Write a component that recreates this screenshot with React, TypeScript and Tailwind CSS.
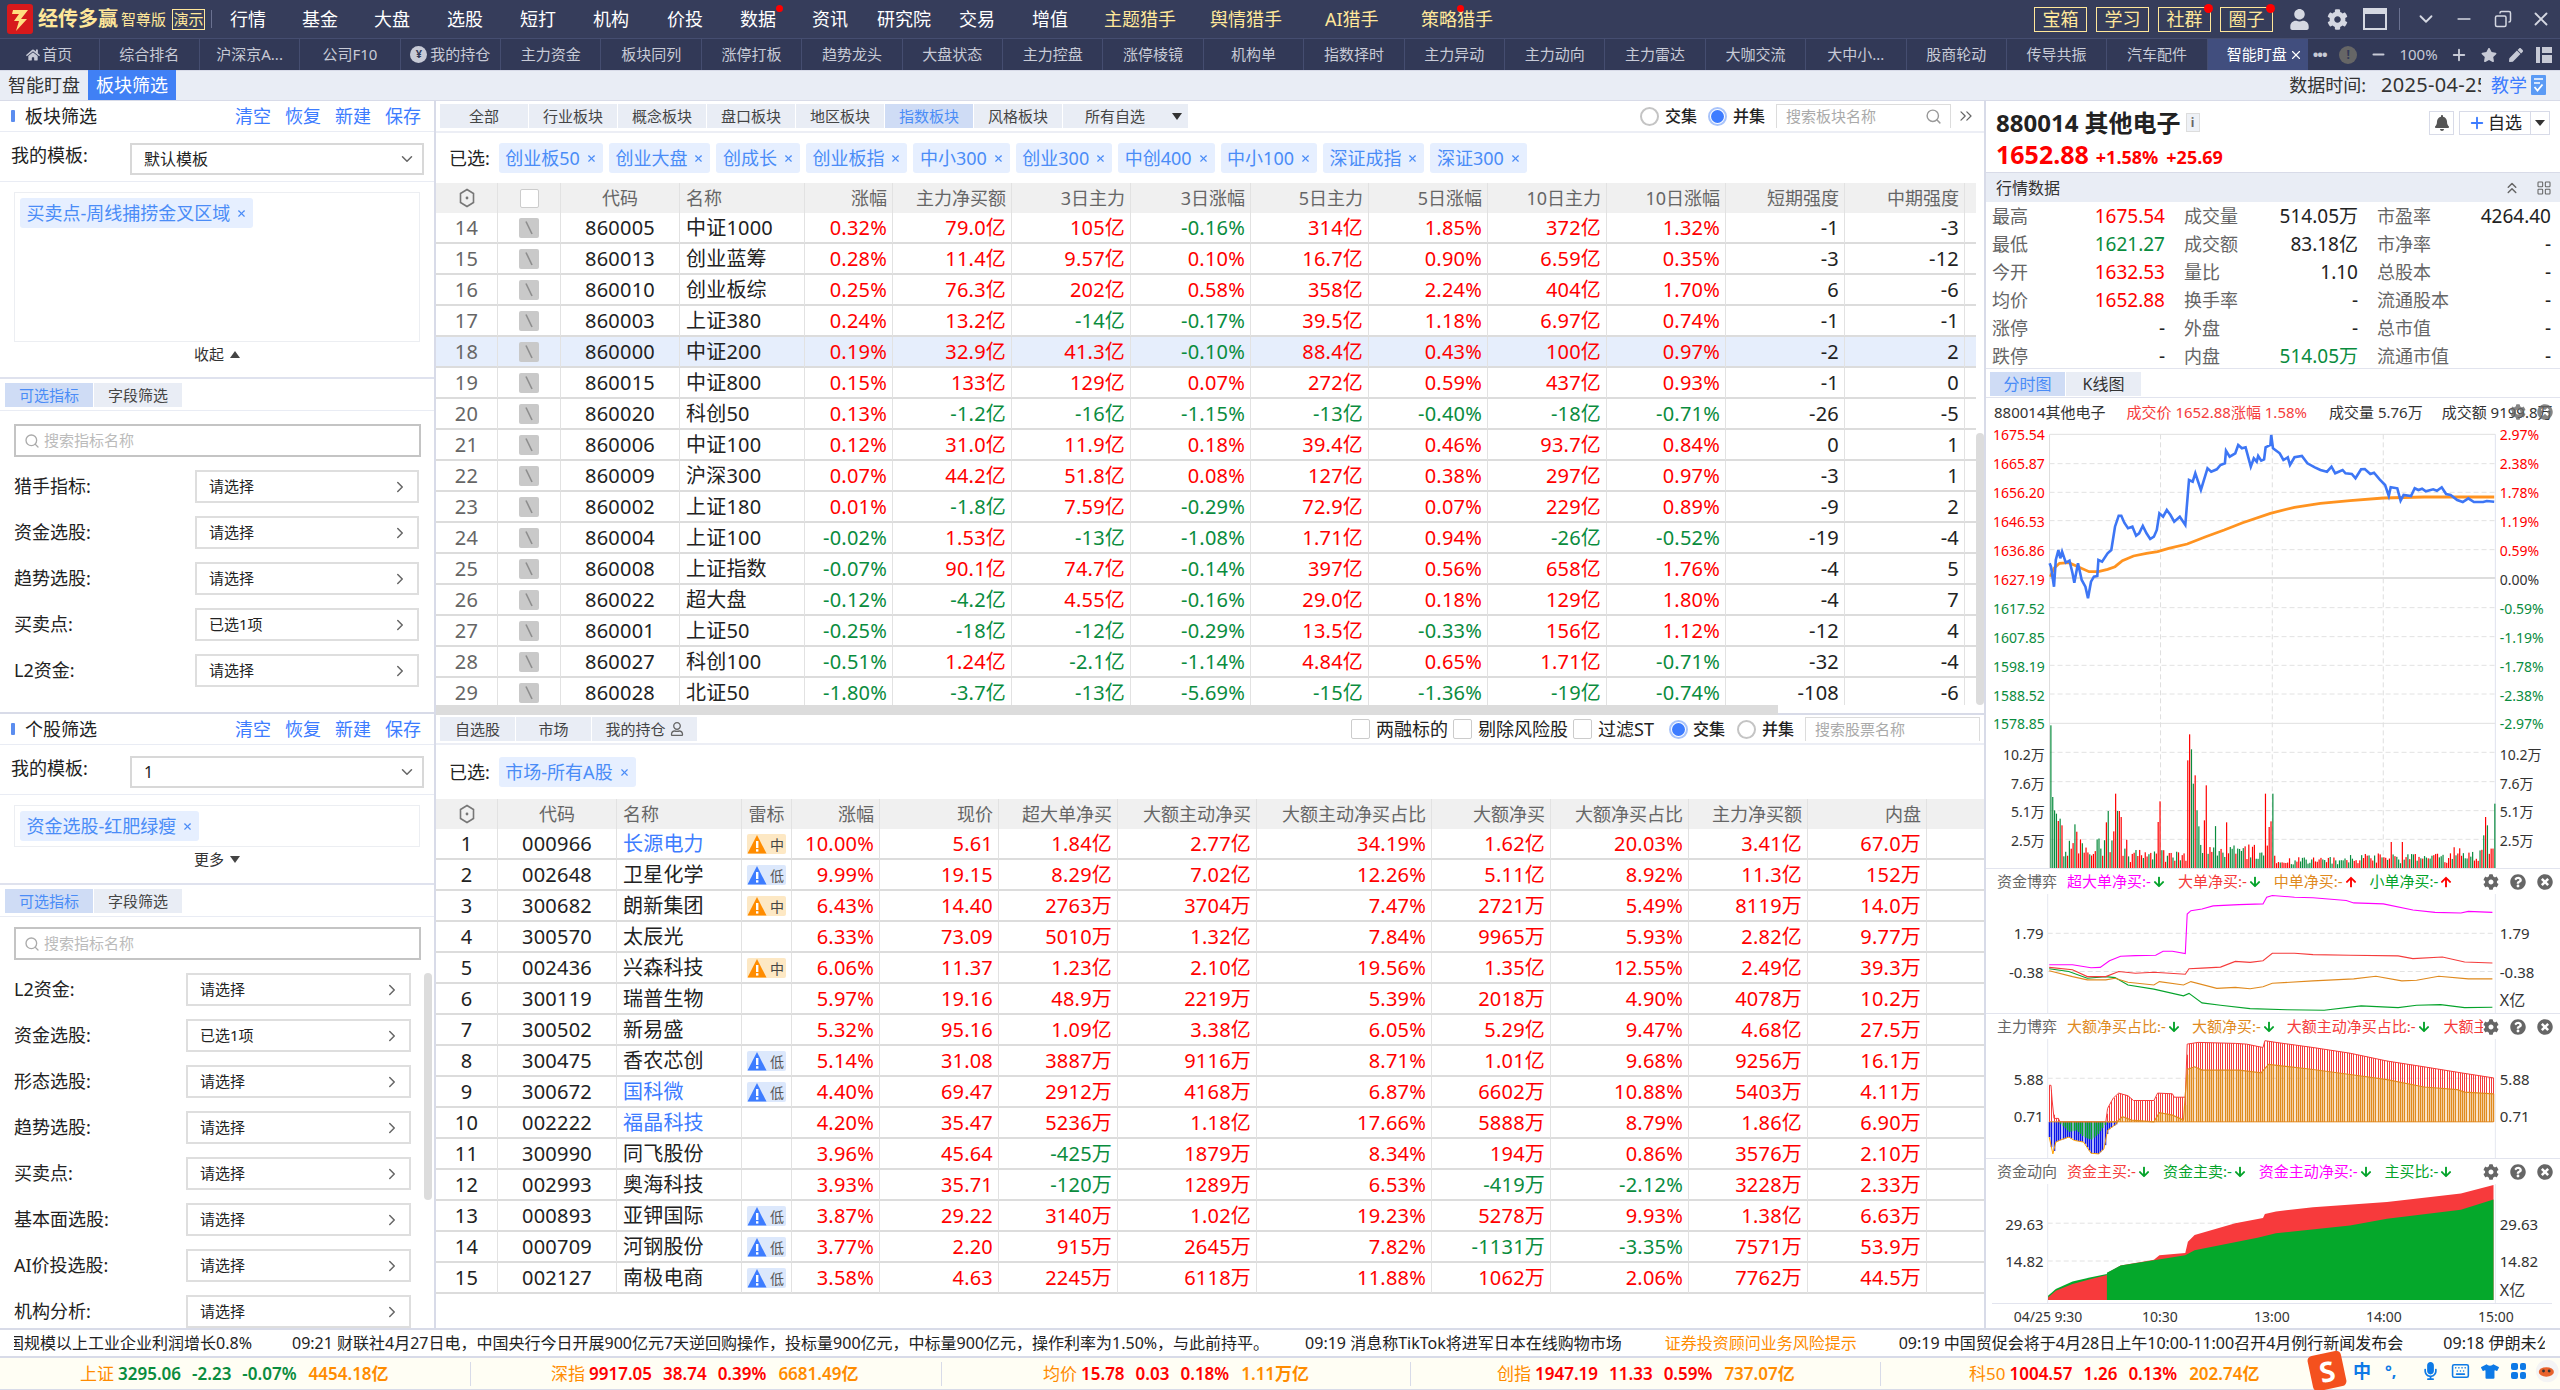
import { ChevronDown, ChevronRight, ChevronsRight, ChevronsUp, LayoutGrid, Minus, Plus, Search, X, Copy, Keyboard } from "lucide-react";
import { FaArrowDown, FaArrowUp, FaBell, FaCog, FaHome, FaMicrophone, FaPen, FaQuestionCircle, FaRegUser, FaStar, FaTimesCircle, FaTshirt, FaUser } from "react-icons/fa";

type Pt = [number, number];

const topMenu: [string, number, boolean, boolean][] = [
  ["行情", 72, false, false],
  ["基金", 72, false, false],
  ["大盘", 73, false, false],
  ["选股", 73, false, false],
  ["短打", 73, false, false],
  ["机构", 74, false, false],
  ["价投", 73, false, false],
  ["数据", 72, false, true],
  ["资讯", 65, false, false],
  ["研究院", 82, false, false],
  ["交易", 73, false, false],
  ["增值", 72, false, false],
  ["主题猎手", 106, true, false],
  ["舆情猎手", 115, true, false],
  ["AI猎手", 96, true, false],
  ["策略猎手", 90, true, true],
];

const navTabs = ["综合排名", "沪深京A...", "公司F10", "我的持仓", "主力资金", "板块同列", "涨停打板", "趋势龙头", "大盘状态", "主力控盘", "涨停棱镜", "机构单", "指数择时", "主力异动", "主力动向", "主力雷达", "大咖交流", "大中小...", "股商轮动", "传导共振", "汽车配件"];

const boardTags = ["创业板50", "创业大盘", "创成长", "创业板指", "中小300", "创业300", "中创400", "中小100", "深证成指", "深证300"];

const boardRows = [
  ["14", "860005", "中证1000", "0.32%", "79.0亿", "105亿", "-0.16%", "314亿", "1.85%", "372亿", "1.32%", "-1", "-3"],
  ["15", "860013", "创业蓝筹", "0.28%", "11.4亿", "9.57亿", "0.10%", "16.7亿", "0.90%", "6.59亿", "0.35%", "-3", "-12"],
  ["16", "860010", "创业板综", "0.25%", "76.3亿", "202亿", "0.58%", "358亿", "2.24%", "404亿", "1.70%", "6", "-6"],
  ["17", "860003", "上证380", "0.24%", "13.2亿", "-14亿", "-0.17%", "39.5亿", "1.18%", "6.97亿", "0.74%", "-1", "-1"],
  ["18", "860000", "中证200", "0.19%", "32.9亿", "41.3亿", "-0.10%", "88.4亿", "0.43%", "100亿", "0.97%", "-2", "2"],
  ["19", "860015", "中证800", "0.15%", "133亿", "129亿", "0.07%", "272亿", "0.59%", "437亿", "0.93%", "-1", "0"],
  ["20", "860020", "科创50", "0.13%", "-1.2亿", "-16亿", "-1.15%", "-13亿", "-0.40%", "-18亿", "-0.71%", "-26", "-5"],
  ["21", "860006", "中证100", "0.12%", "31.0亿", "11.9亿", "0.18%", "39.4亿", "0.46%", "93.7亿", "0.84%", "0", "1"],
  ["22", "860009", "沪深300", "0.07%", "44.2亿", "51.8亿", "0.08%", "127亿", "0.38%", "297亿", "0.97%", "-3", "1"],
  ["23", "860002", "上证180", "0.01%", "-1.8亿", "7.59亿", "-0.29%", "72.9亿", "0.07%", "229亿", "0.89%", "-9", "2"],
  ["24", "860004", "上证100", "-0.02%", "1.53亿", "-13亿", "-1.08%", "1.71亿", "0.94%", "-26亿", "-0.52%", "-19", "-4"],
  ["25", "860008", "上证指数", "-0.07%", "90.1亿", "74.7亿", "-0.14%", "397亿", "0.56%", "658亿", "1.76%", "-4", "5"],
  ["26", "860022", "超大盘", "-0.12%", "-4.2亿", "4.55亿", "-0.16%", "29.0亿", "0.18%", "129亿", "1.80%", "-4", "7"],
  ["27", "860001", "上证50", "-0.25%", "-18亿", "-12亿", "-0.29%", "13.5亿", "-0.33%", "156亿", "1.12%", "-12", "4"],
  ["28", "860027", "科创100", "-0.51%", "1.24亿", "-2.1亿", "-1.14%", "4.84亿", "0.65%", "1.71亿", "-0.71%", "-32", "-4"],
  ["29", "860028", "北证50", "-1.80%", "-3.7亿", "-13亿", "-5.69%", "-15亿", "-1.36%", "-19亿", "-0.74%", "-108", "-6"],
];

const stockRows = [
  ["1", "000966", "长源电力", "中", "10.00%", "5.61", "1.84亿", "2.77亿", "34.19%", "1.62亿", "20.03%", "3.41亿", "67.0万"],
  ["2", "002648", "卫星化学", "低", "9.99%", "19.15", "8.29亿", "7.02亿", "12.26%", "5.11亿", "8.92%", "11.3亿", "152万"],
  ["3", "300682", "朗新集团", "中", "6.43%", "14.40", "2763万", "3704万", "7.47%", "2721万", "5.49%", "8119万", "14.0万"],
  ["4", "300570", "太辰光", "", "6.33%", "73.09", "5010万", "1.32亿", "7.84%", "9965万", "5.93%", "2.82亿", "9.77万"],
  ["5", "002436", "兴森科技", "中", "6.06%", "11.37", "1.23亿", "2.10亿", "19.56%", "1.35亿", "12.55%", "2.49亿", "39.3万"],
  ["6", "300119", "瑞普生物", "", "5.97%", "19.16", "48.9万", "2219万", "5.39%", "2018万", "4.90%", "4078万", "10.2万"],
  ["7", "300502", "新易盛", "", "5.32%", "95.16", "1.09亿", "3.38亿", "6.05%", "5.29亿", "9.47%", "4.68亿", "27.5万"],
  ["8", "300475", "香农芯创", "低", "5.14%", "31.08", "3887万", "9116万", "8.71%", "1.01亿", "9.68%", "9256万", "16.1万"],
  ["9", "300672", "国科微", "低", "4.40%", "69.47", "2912万", "4168万", "6.87%", "6602万", "10.88%", "5403万", "4.11万"],
  ["10", "002222", "福晶科技", "", "4.20%", "35.47", "5236万", "1.18亿", "17.66%", "5888万", "8.79%", "1.86亿", "6.90万"],
  ["11", "300990", "同飞股份", "", "3.96%", "45.64", "-425万", "1879万", "8.34%", "194万", "0.86%", "3576万", "2.10万"],
  ["12", "002993", "奥海科技", "", "3.93%", "35.71", "-120万", "1289万", "6.53%", "-419万", "-2.12%", "3228万", "2.33万"],
  ["13", "000893", "亚钾国际", "低", "3.87%", "29.22", "3140万", "1.02亿", "19.23%", "5278万", "9.93%", "1.38亿", "6.63万"],
  ["14", "000709", "河钢股份", "低", "3.77%", "2.20", "915万", "2645万", "7.82%", "-1131万", "-3.35%", "7571万", "53.9万"],
  ["15", "002127", "南极电商", "低", "3.58%", "4.63", "2245万", "6118万", "11.88%", "1062万", "2.06%", "7762万", "44.5万"],
];

const blueNames = ["长源电力", "国科微", "福晶科技"];

const quoteData = [
  ["上证", "3295.06", "-2.23", "-0.07%", "4454.18亿", "pl-[80px]"],
  ["深指", "9917.05", "38.74", "0.39%", "6681.49亿", "pl-[80px]"],
  ["均价", "15.78", "0.03", "0.18%", "1.11万亿", "pl-[101px]"],
  ["创指", "1947.19", "11.33", "0.59%", "737.07亿", "pl-[86px]"],
  ["科50", "1004.57", "1.26", "0.13%", "202.74亿", "pl-[88px]"],
];

const marketStats = [
  ["最高", "1675.54", "text-[#f00]", "成交量", "514.05万", "text-[#222]", "市盈率", "4264.40", "text-[#222]"],
  ["最低", "1621.27", "text-[#0a8c3e]", "成交额", "83.18亿", "text-[#222]", "市净率", "-", "text-[#222]"],
  ["今开", "1632.53", "text-[#f00]", "量比", "1.10", "text-[#222]", "总股本", "-", "text-[#222]"],
  ["均价", "1652.88", "text-[#f00]", "换手率", "-", "text-[#222]", "流通股本", "-", "text-[#222]"],
  ["涨停", "-", "text-[#222]", "外盘", "-", "text-[#222]", "总市值", "-", "text-[#222]"],
  ["跌停", "-", "text-[#222]", "内盘", "514.05万", "text-[#0a8c3e]", "流通市值", "-", "text-[#222]"],
];

const blueLine: Pt[] = [[188,580],[192,590],[200,650],[205,570],[212,540],[217,565],[222,545],[232,578],[242,572],[250,610],[255,638],[265,580],[275,630],[285,650],[292,685],[300,635],[308,620],[317,618],[320,570],[330,575],[345,550],[355,540],[365,470],[375,437],[382,437],[390,458],[400,475],[412,470],[422,497],[430,490],[440,468],[450,490],[460,507],[470,500],[478,480],[485,430],[495,440],[505,420],[515,435],[525,455],[540,440],[555,465],[565,330],[575,335],[582,310],[597,360],[615,295],[625,305],[640,298],[650,285],[662,280],[665,242],[675,260],[690,250],[698,225],[708,235],[718,232],[732,290],[740,265],[748,275],[752,258],[760,272],[768,268],[772,232],[785,225],[787,195],[792,235],[810,250],[820,270],[832,262],[838,285],[850,262],[870,258],[885,280],[905,292],[920,300],[938,305],[950,290],[960,310],[980,300],[988,310],[1005,312],[1015,325],[1030,298],[1040,297],[1055,312],[1065,308],[1080,328],[1095,345],[1105,378],[1110,352],[1128,355],[1137,392],[1145,375],[1165,378],[1175,355],[1185,360],[1195,356],[1205,364],[1225,358],[1235,362],[1248,352],[1260,372],[1272,375],[1290,390],[1305,396],[1320,385],[1335,396],[1360,396],[1370,393],[1390,395]];
const avgLine: Pt[] = [[190,620],[200,595],[215,580],[240,578],[265,590],[295,605],[320,605],[345,598],[365,590],[385,572],[415,558],[450,550],[480,545],[510,535],[560,522],[610,500],[660,480],[710,458],[785,430],[850,412],[920,400],[1000,392],[1090,384],[1200,381],[1390,381]];

const superLine: Pt[] = [[187,310],[250,310],[300,319],[325,318],[350,298],[380,285],[420,283],[475,282],[495,270],[520,270],[555,277],[560,160],[570,150],[600,145],[630,136],[700,132],[765,130],[775,110],[790,105],[850,110],[900,112],[990,120],[1010,127],[1090,130],[1170,148],[1230,155],[1300,157],[1320,152],[1385,155]];
const largeLine: Pt[] = [[187,318],[250,325],[290,345],[340,345],[375,330],[420,335],[470,332],[555,338],[565,322],[600,320],[650,317],[690,300],[730,303],[765,298],[790,276],[850,276],[900,280],[1000,282],[1130,284],[1170,292],[1250,287],[1310,302],[1385,305]];
const midLine: Pt[] = [[187,328],[250,345],[290,355],[340,355],[365,350],[400,362],[470,370],[485,360],[550,370],[570,360],[640,380],[690,377],[730,381],[765,375],[790,365],[900,358],[1010,352],[1070,344],[1140,358],[1180,356],[1240,344],[1320,352],[1385,352]];
const smallLine: Pt[] = [[187,322],[240,330],[290,350],[340,345],[365,348],[400,370],[470,382],[550,402],[565,395],[600,423],[650,430],[730,440],[830,443],[930,445],[1030,432],[1130,437],[1180,430],[1245,428],[1310,437],[1385,436]];

const mainRedTop: Pt[] = [[187,667],[192,667],[195,710],[200,765],[212,765],[216,775],[340,775],[345,735],[360,705],[375,690],[400,698],[415,712],[470,712],[480,690],[520,692],[525,702],[555,702],[560,545],[590,540],[690,543],[720,545],[765,555],[770,535],[800,540],[900,555],[1000,572],[1100,595],[1200,612],[1300,630],[1388,645]];
const mainOrangeTop: Pt[] = [[345,775],[370,775],[385,760],[410,770],[470,775],[485,748],[520,755],[550,770],[560,620],[580,612],[600,622],[700,622],[760,630],[780,605],[820,610],[900,620],[1000,635],[1100,650],[1200,672],[1290,680],[1310,687],[1388,692]];
const mainBlueBottom: Pt[] = [[187,820],[197,870],[205,835],[215,830],[240,820],[255,830],[280,835],[300,868],[320,870],[335,855],[345,800],[370,780],[372,775]];
const mainGreenBottom: Pt[] = [[215,780],[240,805],[260,800],[280,820],[300,828],[320,810],[340,780]];

const flowRedTop: Pt[] = [[184,1295],[205,1275],[250,1255],[300,1240],[343,1228],[345,1222],[380,1200],[470,1183],[485,1170],[555,1163],[562,1130],[580,1110],[690,1075],[765,1060],[770,1048],[800,1040],[900,1028],[1100,1012],[1300,987],[1388,962]];
const flowGreenHead: Pt[] = [[184,1290],[205,1270],[250,1248],[300,1235],[343,1225]];
const flowGreenTop: Pt[] = [[343,1222],[380,1200],[470,1185],[555,1170],[580,1155],[750,1118],[800,1105],[1000,1082],[1100,1062],[1300,1035],[1388,1005]];

const volSpikes: [number, number, string][] = [[190,1065,"g"],[195,1280,"g"],[200,1320,"g"],[205,1330,"g"],[210,1352,"r"],[215,1345,"g"],[220,1365,"r"],[255,1362,"g"],[340,1356,"r"],[345,1322,"g"],[365,1270,"r"],[370,1322,"g"],[375,1322,"r"],[380,1340,"r"],[480,1355,"r"],[485,1293,"r"],[560,1170,"r"],[565,1092,"r"],[570,1137,"g"],[575,1240,"g"],[580,1215,"r"],[585,1320,"g"],[590,1368,"g"],[605,1350,"r"],[610,1245,"r"],[665,1356,"r"],[770,1270,"r"],[780,1370,"r"],[785,1353,"r"],[790,1270,"g"],[1110,1415,"r"],[1140,1415,"r"],[1360,1395,"g"],[1365,1340,"r"],[1370,1365,"g"],[1390,1300,"g"]];

// zoom-space helpers: chart data was read off with x scale 2.703
const sx = (zx: number) => zx / 2.703 - 6;

function toPath(pts: Pt[], fy: (zy: number) => number) {
  return pts.map(([x, y]) => `${sx(x).toFixed(1)},${fy(y).toFixed(1)}`).join(" ");
}

function interp(pts: Pt[], x: number) {
  if (x <= pts[0][0]) return pts[0][1];
  for (let i = 1; i < pts.length; i++) {
    if (x <= pts[i][0]) {
      const [x0, y0] = pts[i - 1];
      const [x1, y1] = pts[i];
      return y0 + ((y1 - y0) * (x - x0)) / (x1 - x0);
    }
  }
  return pts[pts.length - 1][1];
}

function volumeBars() {
  let seed = 77;
  const rnd = () => {
    seed = (seed * 16807) % 2147483647;
    return seed / 2147483647;
  };
  const bars: { x: number; h: number; red: boolean }[] = [];
  for (let zx = 190; zx <= 1390; zx += 5) {
    let amp = 40;
    if (zx < 400) amp = 100;
    else if (zx < 560) amp = 50;
    else if (zx < 640) amp = 120;
    else if (zx < 800) amp = 65;
    else if (zx < 1000) amp = 30;
    else if (zx < 1280) amp = 40;
    else amp = 60;
    const spike = volSpikes.find((s) => s[0] === zx);
    if (spike) bars.push({ x: zx, h: 1493 - spike[1], red: spike[2] === "r" });
    else bars.push({ x: zx, h: amp * (0.35 + rnd() * 0.75), red: rnd() > 0.5 });
  }
  return bars;
}

const GREEN = "#0a8c3e";
const RED = "#f00";

function signColor(v: string) {
  return v.startsWith("-") ? "text-[#0a8c3e]" : "text-[#f00]";
}

function Tab({ label, active, width }: { label: string; active?: boolean; width: string }) {
  return (
    <div className={`flex h-[24px] items-center justify-center text-[15px] ${width} ${active ? "bg-[#cfdcf5] text-[#4a8cf7]" : "bg-[#e9edf5] text-[#444]"}`}>
      {label}
    </div>
  );
}

function Tag({ label }: { label: string }) {
  return (
    <div className="flex h-[30px] items-center gap-[6px] rounded-[3px] bg-[#e6efff] pr-[6px] pl-[6.5px] text-[18px] whitespace-nowrap text-[#4a8cf7]">
      {label}
      <X size={11} strokeWidth={2.5} />
    </div>
  );
}

function Radio({ on }: { on?: boolean }) {
  return (
    <div className={`flex h-[19px] w-[19px] items-center justify-center rounded-full border-2 bg-white ${on ? "border-[#a9c4fa]" : "border-[#c4c4c4]"}`}>
      {on && <div className="h-[13px] w-[13px] rounded-full bg-[#3d7cff]" />}
    </div>
  );
}

function PanelHeader({ title }: { title: string }) {
  return (
    <div className="flex h-[31px] shrink-0 items-center justify-between border-b border-[#e9ecf4] pr-[13px] pl-[11px]">
      <div className="flex items-center gap-[10px] text-[18px] text-[#222]">
        <div className="h-[12px] w-[4px] rounded-[1px] bg-[#5b8def]" />
        {title}
      </div>
      <div className="flex gap-[14px] text-[18px] text-[#3d7cff]">
        <span>清空</span>
        <span>恢复</span>
        <span>新建</span>
        <span>保存</span>
      </div>
    </div>
  );
}

function TemplateRow({ value }: { value: string }) {
  return (
    <div className="flex h-[50px] shrink-0 items-center border-b border-[#e9ecf4] pl-[11px]">
      <div className="mb-[3px] w-[119px] text-[18px] text-[#222]">我的模板:</div>
      <div className="mt-[5px] flex h-[32px] w-[294px] items-center justify-between border-2 border-[#d8d8d8] pr-[6px] pl-[12px] text-[16px] text-[#222]">
        {value}
        <ChevronDown size={18} className="text-[#666]" />
      </div>
    </div>
  );
}

function FilterTabs() {
  return (
    <div className="flex h-[32px] shrink-0 gap-[1px] border-b border-[#e9ecf4] pt-[4px] pl-[5px]">
      <Tab label="可选指标" active width="w-[88px]" />
      <Tab label="字段筛选" width="w-[88px]" />
    </div>
  );
}

function SearchBox({ margin }: { margin: string }) {
  return (
    <div className={`mx-[14px] flex h-[33px] w-[407px] shrink-0 items-center gap-[4px] border-2 border-[#c4c4c4] pl-[8px] text-[15px] text-[#bbb] ${margin}`}>
      <Search size={16} className="text-[#aaa]" />
      搜索指标名称
    </div>
  );
}

function FilterRow({ label, value, labelWidth, selectWidth }: { label: string; value: string; labelWidth: string; selectWidth: string }) {
  return (
    <div className="flex h-[33px] shrink-0 items-center">
      <div className={`text-[18px] text-[#222] ${labelWidth}`}>{label}</div>
      <div className={`flex h-[33px] items-center justify-between border-2 border-[#dedede] pr-[8px] pl-[12px] text-[15px] text-[#222] ${selectWidth}`}>
        {value}
        <ChevronRight size={18} className="text-[#666]" />
      </div>
    </div>
  );
}

function LeftPanel() {
  const upper = [["猎手指标:", "请选择"], ["资金选股:", "请选择"], ["趋势选股:", "请选择"], ["买卖点:", "已选1项"], ["L2资金:", "请选择"]];
  const lower = [["L2资金:", "请选择"], ["资金选股:", "已选1项"], ["形态选股:", "请选择"], ["趋势选股:", "请选择"], ["买卖点:", "请选择"], ["基本面选股:", "请选择"], ["AI价投选股:", "请选择"], ["机构分析:", "请选择"]];
  return (
    <div className="flex w-[436px] shrink-0 flex-col overflow-hidden border-r-2 border-[#d8dbe8]">
      <div className="flex h-[613px] shrink-0 flex-col border-b-2 border-[#d8dbe8]">
        <PanelHeader title="板块筛选" />
        <TemplateRow value="默认模板" />
        <div className="mx-[14px] mt-[10px] h-[150px] shrink-0 border border-[#eceef2] p-[5px]">
          <div className="inline-flex">
            <Tag label="买卖点-周线捕捞金叉区域" />
          </div>
        </div>
        <div className="flex h-[37px] shrink-0 items-center justify-center gap-[6px] border-b-2 border-[#dfe2ee] pb-[10px] text-[15px] text-[#333]">
          收起
          <div className="h-0 w-0 border-x-[5px] border-b-[7px] border-x-transparent border-b-[#444]" />
        </div>
        <FilterTabs />
        <SearchBox margin="mt-[13px]" />
        <div className="mt-[13px] flex flex-col gap-[13px] px-[14px]">
          {upper.map(([l, v]) => (
            <FilterRow key={l} label={l} value={v} labelWidth="w-[181px]" selectWidth="w-[224px]" />
          ))}
        </div>
      </div>
      <PanelHeader title="个股筛选" />
      <TemplateRow value="1" />
      <div className="mx-[14px] mt-[10px] h-[42px] shrink-0 border border-[#eceef2] py-[5px] pl-[5px]">
        <div className="inline-flex">
          <Tag label="资金选股-红肥绿瘦" />
        </div>
      </div>
      <div className="flex h-[38px] shrink-0 items-center justify-center gap-[6px] border-b-2 border-[#dfe2ee] pb-[12px] text-[15px] text-[#333]">
        更多
        <div className="h-0 w-0 border-x-[5px] border-t-[7px] border-x-transparent border-t-[#444]" />
      </div>
      <FilterTabs />
      <SearchBox margin="mt-[10px]" />
      <div className="mt-[13px] flex pl-[14px]">
        <div className="flex w-[397px] flex-col gap-[13px]">
          {lower.map(([l, v]) => (
            <FilterRow key={l} label={l} value={v} labelWidth="w-[172px]" selectWidth="w-[225px]" />
          ))}
        </div>
        <div className="ml-[13px] h-[227px] w-[8px] rounded-[4px] bg-[#dcdcdc]" />
      </div>
    </div>
  );
}

function HexIcon() {
  return (
    <svg width="16" height="20" viewBox="0 0 16 20" fill="none" stroke="#777" strokeWidth="1.6">
      <path d="M8 1.5 14.5 5.5V14.5L8 18.5 1.5 14.5V5.5Z" />
      <circle cx="8" cy="10" r="1.4" fill="#777" stroke="none" />
    </svg>
  );
}

function FlatIcon() {
  return (
    <svg width="20" height="20" viewBox="0 0 20 20">
      <rect width="20" height="20" rx="2" fill="#c9c9c9" />
      <path d="M7 3.5 13 16" stroke="#8d8d8d" strokeWidth="1.6" />
    </svg>
  );
}

const boardCols = "grid-cols-[62px_63px_119px_125px_88px_119px_119px_120px_118px_119px_119px_119px_119px_120px_10px]";
const stockCols = "grid-cols-[62px_119px_125px_50px_88px_119px_119px_139px_175px_119px_138px_119px_119px_50px]";

function BoardTable() {
  const heads = ["涨幅", "主力净买额", "3日主力", "3日涨幅", "5日主力", "5日涨幅", "10日主力", "10日涨幅", "短期强度", "中期强度"];
  return (
    <div className="h-[522px] overflow-hidden">
      <div className={`grid h-[30px] bg-[#f0f0f0] text-[18px] text-[#666] ${boardCols}`}>
        <div className="flex items-center justify-center border-r border-[#e2e2e2]"><HexIcon /></div>
        <div className="flex items-center justify-center border-r border-[#e2e2e2]">
          <div className="h-[19px] w-[19px] rounded-[2px] border border-[#ccc] bg-white" />
        </div>
        <div className="flex items-center justify-center border-r border-[#e2e2e2]">代码</div>
        <div className="flex items-center border-r border-[#e2e2e2] pl-[6px]">名称</div>
        {heads.map((h) => (
          <div key={h} className="flex items-center justify-end border-r border-[#e2e2e2] pr-[5px]">{h}</div>
        ))}
      </div>
      {boardRows.map((r) => {
        const selected = r[0] === "18";
        return (
          <div key={r[0]} className={`grid h-[31px] border-b-2 border-[#dcdcdc] text-[20px] tracking-[0.2px] ${boardCols} ${selected ? "bg-[#e6eefc]" : ""}`}>
            <div className="flex items-center justify-center border-r border-[#e2e2e2] text-[#666]">{r[0]}</div>
            <div className="flex items-center justify-center border-r border-[#e2e2e2]"><FlatIcon /></div>
            <div className="flex items-center justify-center border-r border-[#e2e2e2] text-[#222]">{r[1]}</div>
            <div className="flex items-center border-r border-[#e2e2e2] pl-[6px] text-[#222]">{r[2]}</div>
            {r.slice(3, 11).map((v, i) => (
              <div key={i} className={`flex items-center justify-end border-r border-[#e2e2e2] pr-[5px] ${signColor(v)}`}>{v}</div>
            ))}
            {r.slice(11).map((v, i) => (
              <div key={i} className="flex items-center justify-end border-r border-[#e2e2e2] pr-[5px] text-[#222]">{v}</div>
            ))}
          </div>
        );
      })}
    </div>
  );
}

function RiskBadge({ level }: { level: string }) {
  if (!level) return null;
  const mid = level === "中";
  return (
    <div className={`flex h-[20px] w-[39px] items-center justify-between rounded-[2px] pr-[2px] text-[14px] tracking-normal ${mid ? "bg-[#fde8c4] text-[#444]" : "bg-[#dce8fc] text-[#555]"}`}>
      <svg width="20" height="20" viewBox="0 0 20 20">
        <path d="M10 1 19.5 19.5H.5Z" fill={mid ? "#ff8c00" : "#3d7cff"} />
        <rect x="9" y="7" width="2.4" height="7" fill="#fff" />
        <rect x="9" y="15.2" width="2.4" height="2.4" fill="#fff" />
      </svg>
      {level}
    </div>
  );
}

function StockTable() {
  const heads = ["涨幅", "现价", "超大单净买", "大额主动净买", "大额主动净买占比", "大额净买", "大额净买占比", "主力净买额", "内盘"];
  return (
    <div>
      <div className={`grid h-[30px] bg-[#f0f0f0] text-[18px] text-[#666] ${stockCols}`}>
        <div className="flex items-center justify-center border-r border-[#e2e2e2]"><HexIcon /></div>
        <div className="flex items-center justify-center border-r border-[#e2e2e2]">代码</div>
        <div className="flex items-center border-r border-[#e2e2e2] pl-[6px]">名称</div>
        <div className="flex items-center justify-center border-r border-[#e2e2e2]">雷标</div>
        {heads.map((h) => (
          <div key={h} className="flex items-center justify-end border-r border-[#e2e2e2] pr-[5px]">{h}</div>
        ))}
      </div>
      {stockRows.map((r) => (
        <div key={r[0]} className={`grid h-[31px] border-b-2 border-[#dcdcdc] text-[20px] tracking-[0.2px] ${stockCols}`}>
          <div className="flex items-center justify-center border-r border-[#e2e2e2] text-[#222]">{r[0]}</div>
          <div className="flex items-center justify-center border-r border-[#e2e2e2] text-[#222]">{r[1]}</div>
          <div className={`flex items-center border-r border-[#e2e2e2] pl-[6px] ${blueNames.includes(r[2]) ? "text-[#3d7cff]" : "text-[#222]"}`}>{r[2]}</div>
          <div className="flex items-center justify-center border-r border-[#e2e2e2]"><RiskBadge level={r[3]} /></div>
          {r.slice(4).map((v, i) => (
            <div key={i} className={`flex items-center justify-end border-r border-[#e2e2e2] pr-[5px] ${signColor(v)}`}>{v}</div>
          ))}
        </div>
      ))}
    </div>
  );
}

function CenterPanel() {
  const tabs = ["全部", "行业板块", "概念板块", "盘口板块", "地区板块", "指数板块", "风格板块"];
  return (
    <div className="flex w-[1550px] shrink-0 flex-col overflow-hidden border-r-2 border-[#d8dbe8]">
      <div className="h-[614px] shrink-0 border-b-2 border-[#d8dbe8]">
        <div className="flex h-[32px] items-center border-b-2 border-[#eceef5] pr-[8px] pl-[4px]">
          <div className="flex gap-[1px]">
            {tabs.map((t) => (
              <Tab key={t} label={t} active={t === "指数板块"} width="w-[88px]" />
            ))}
            <div className="flex h-[24px] w-[125px] items-center justify-between bg-[#e9edf5] pr-[6px] pl-[22px] text-[15px] text-[#444]">
              所有自选
              <div className="h-0 w-0 border-x-[5px] border-t-[7px] border-x-transparent border-t-[#333]" />
            </div>
          </div>
          <div className="ml-auto flex items-center">
            <Radio />
            <span className="ml-[6px] text-[16px] font-medium text-[#222]">交集</span>
            <div className="ml-[11px]"><Radio on /></div>
            <span className="ml-[6px] text-[16px] font-medium text-[#222]">并集</span>
            <div className="ml-[11px] flex h-[24px] w-[175px] items-center justify-between border-x border-t border-[#dcdcdc] pr-[8px] pl-[9px] text-[15px] text-[#aaa]">
              搜索板块名称
              <Search size={17} className="text-[#999]" />
            </div>
            <ChevronsRight size={20} strokeWidth={1.5} className="ml-[5px] text-[#666]" />
          </div>
        </div>
        <div className="flex h-[50px] items-center gap-[6px] pl-[13px]">
          <span className="mr-[3px] text-[18px] text-[#222]">已选:</span>
          {boardTags.map((t) => (
            <Tag key={t} label={t} />
          ))}
        </div>
        <div className="flex">
          <div className="w-[1540px]">
            <BoardTable />
          </div>
          <div className="mt-[250px] h-[272px] w-[8px] rounded-[4px] bg-[#dcdcdc]" />
        </div>
        <div className="h-[10px] w-[1342px] bg-[#dcdcdc]" />
      </div>
      <div className="flex h-[30px] shrink-0 items-center border-b-2 border-[#eceef5] pr-[4px] pl-[4px]">
        <div className="flex gap-[1px]">
          <Tab label="自选股" width="w-[75px]" />
          <Tab label="市场" width="w-[75px]" />
          <div className="flex h-[24px] w-[105px] items-center justify-center gap-[4px] bg-[#e9edf5] text-[15px] text-[#444]">
            我的持仓
            <FaRegUser size={14} className="text-[#666]" />
          </div>
        </div>
        <div className="ml-auto flex items-center text-[18px] text-[#222]">
          <div className="h-[20px] w-[19px] rounded-[2px] border border-[#ccc]" />
          <span className="ml-[6px]">两融标的</span>
          <div className="ml-[5px] h-[20px] w-[19px] rounded-[2px] border border-[#ccc]" />
          <span className="ml-[6px]">剔除风险股</span>
          <div className="ml-[5px] h-[20px] w-[19px] rounded-[2px] border border-[#ccc]" />
          <span className="ml-[6px]">过滤ST</span>
          <div className="ml-[15px]"><Radio on /></div>
          <span className="ml-[5px] text-[16px] font-medium">交集</span>
          <div className="ml-[12px]"><Radio /></div>
          <span className="ml-[6px] text-[16px] font-medium">并集</span>
          <div className="ml-[11px] flex h-[24px] w-[175px] items-center border-x border-t border-[#dcdcdc] pl-[9px] text-[15px] text-[#aaa]">搜索股票名称</div>
        </div>
      </div>
      <div className="flex h-[54px] shrink-0 items-center gap-[6px] pl-[13px]">
        <span className="mr-[3px] text-[18px] text-[#222]">已选:</span>
        <Tag label="市场-所有A股" />
      </div>
      <StockTable />
    </div>
  );
}

function TimeChart() {
  const w = 574;
  const fy = (zy: number) => zy / 3 - 61;
  const grids = [281, 367, 452, 539, 713, 800, 886, 972, 1147, 1235, 1322, 1408];
  const leftLabels: [string, number, string][] = [["1675.54", 195, RED], ["1665.87", 282, RED], ["1656.20", 368, RED], ["1646.53", 456, RED], ["1636.86", 543, RED], ["1627.19", 630, RED], ["1617.52", 717, GREEN], ["1607.85", 804, GREEN], ["1598.19", 891, GREEN], ["1588.52", 978, GREEN], ["1578.85", 1062, GREEN], ["10.2万", 1155, "#333"], ["7.6万", 1242, "#333"], ["5.1万", 1327, "#333"], ["2.5万", 1414, "#333"]];
  const rightLabels: [string, number, string][] = [["2.97%", 195, RED], ["2.38%", 282, RED], ["1.78%", 368, RED], ["1.19%", 456, RED], ["0.59%", 543, RED], ["0.00%", 630, "#333"], ["-0.59%", 717, GREEN], ["-1.19%", 804, GREEN], ["-1.78%", 891, GREEN], ["-2.38%", 978, GREEN], ["-2.97%", 1062, GREEN], ["10.2万", 1155, "#333"], ["7.6万", 1242, "#333"], ["5.1万", 1327, "#333"], ["2.5万", 1414, "#333"]];
  return (
    <svg width={w} height={437} className="block shrink-0 overflow-visible">
      {grids.map((g) => (
        <line key={g} x1={sx(188)} x2={sx(1393)} y1={fy(g)} y2={fy(g)} stroke="#e2e2e2" strokeDasharray="5 3" />
      ))}
      {[488, 790, 1090].map((v) => (
        <line key={v} x1={sx(v)} x2={sx(v)} y1={fy(193)} y2={437} stroke="#dedede" strokeDasharray="5 3" />
      ))}
      <line x1={sx(188)} x2={sx(1393)} y1={fy(193)} y2={fy(193)} stroke="#e0e0e0" />
      <line x1={sx(188)} x2={sx(1393)} y1={fy(1060)} y2={fy(1060)} stroke="#e0e0e0" />
      <line x1={sx(188)} x2={sx(1393)} y1={fy(624)} y2={fy(624)} stroke="#dddddd" strokeWidth="2" />
      <line x1={sx(188)} x2={sx(188)} y1={fy(193)} y2={437} stroke="#dddddd" />
      <line x1={sx(1393)} x2={sx(1393)} y1={fy(193)} y2={437} stroke="#dfe2ee" />
      {volumeBars().map((b) => (
        <rect key={b.x} x={sx(b.x)} y={437 - b.h / 3} width="1.2" height={b.h / 3} fill={b.red ? "#f00" : "#0a8c3e"} />
      ))}
      <polyline points={toPath(avgLine, fy)} fill="none" stroke="#ff9320" strokeWidth="2.8" />
      <polyline points={toPath(blueLine, fy)} fill="none" stroke="#3d76f5" strokeWidth="2.6" />
      {leftLabels.map(([t, y, c]) => (
        <text key={t} x={sx(175)} y={fy(y) + 5} textAnchor="end" fontSize="14" fill={c}>{t}</text>
      ))}
      {rightLabels.map(([t, y, c]) => (
        <text key={t} x={sx(1405)} y={fy(y) + 5} fontSize="14" fill={c}>{t}</text>
      ))}
    </svg>
  );
}

function SubChart({ y0, h, grids, labels, unit, children }: { y0: number; h: number; grids: number[]; labels: [string, number][]; unit?: number; children: React.ReactNode }) {
  const fy = (zy: number) => 860 + zy / 2.96 - y0;
  return (
    <svg width={574} height={h} className="block shrink-0 overflow-visible">
      {grids.map((g) => (
        <line key={g} x1={sx(183)} x2={sx(1393)} y1={fy(g)} y2={fy(g)} stroke="#e2e2e2" strokeDasharray="5 3" />
      ))}
      <line x1={sx(183)} x2={sx(183)} y1={0} y2={h} stroke="#e6e8f0" />
      <line x1={sx(1393)} x2={sx(1393)} y1={0} y2={h} stroke="#e6e8f0" />
      {children}
      {labels.map(([t, y]) => (
        <g key={t}>
          <text x={sx(172)} y={fy(y) + 5} textAnchor="end" fontSize="15" fill="#333">{t}</text>
          <text x={sx(1405)} y={fy(y) + 5} fontSize="15" fill="#333">{t}</text>
        </g>
      ))}
      {unit !== undefined && <text x={sx(1405)} y={fy(unit) + 6} fontSize="16" fill="#333">X亿</text>}
    </svg>
  );
}

function LineChart() {
  const fy = (zy: number) => 860 + zy / 2.96 - 894;
  return (
    <SubChart y0={894} h={119} grids={[217, 330]} labels={[["1.79", 220], ["-0.38", 333]]} unit={415}>
      <polyline points={toPath(smallLine, fy)} fill="none" stroke="#05a32b" strokeWidth="1.1" />
      <polyline points={toPath(midLine, fy)} fill="none" stroke="#e08a1e" strokeWidth="1.1" />
      <polyline points={toPath(largeLine, fy)} fill="none" stroke="#f53c3c" strokeWidth="1.1" />
      <polyline points={toPath(superLine, fy)} fill="none" stroke="#f0f" strokeWidth="1.1" />
    </SubChart>
  );
}

function MainBarChart() {
  const fy = (zy: number) => 860 + zy / 2.96 - 1039;
  const base = fy(775);
  const xs: number[] = [];
  for (let x = 187; x <= 1388; x += 6) xs.push(x);
  return (
    <SubChart y0={1039} h={119} grids={[646]} labels={[["5.88", 650], ["0.71", 762]]}>
      {xs.map((x) => {
        const px = Math.round(sx(x)) + 0.5;
        const redTop = fy(interp(mainRedTop, x));
        const orangeTop = x >= 345 ? fy(interp(mainOrangeTop, x)) : base;
        const blueEnd = x <= 372 ? fy(interp(mainBlueBottom, x)) : base;
        const greenEnd = x >= 215 && x <= 340 ? fy(interp(mainGreenBottom, x)) : base;
        return (
          <g key={x}>
            <line x1={px} x2={px} y1={base} y2={redTop} stroke="#f53c3c" strokeWidth="1" />
            <line x1={px} x2={px} y1={base} y2={orangeTop} stroke="#e08a1e" strokeWidth="1.5" />
            <line x1={px} x2={px} y1={base} y2={blueEnd} stroke="#0b14e8" strokeWidth="1.6" />
            <line x1={px} x2={px} y1={base} y2={greenEnd} stroke="#05a32b" strokeWidth="1.6" />
          </g>
        );
      })}
      <polyline points={toPath(mainRedTop, fy)} fill="none" stroke="#f53c3c" strokeWidth="1" />
      <polyline points={toPath(mainOrangeTop, fy)} fill="none" stroke="#e08a1e" strokeWidth="1.2" />
      <polyline points={toPath(mainBlueBottom, fy)} fill="none" stroke="#ffa200" strokeWidth="1" />
      <line x1={sx(187)} x2={sx(1388)} y1={base} y2={base} stroke="#e08a1e" strokeWidth="1" />
    </SubChart>
  );
}

function FlowChart() {
  const fy = (zy: number) => 860 + zy / 2.96 - 1184;
  const bottom = 116;
  const area = (pts: Pt[]) => `${toPath(pts, fy)} ${sx(pts[pts.length - 1][0]).toFixed(1)},${bottom} ${sx(pts[0][0]).toFixed(1)},${bottom}`;
  return (
    <SubChart y0={1184} h={119} grids={[1075, 1187]} labels={[["29.63", 1079], ["14.82", 1191]]} unit={1273}>
      <polygon points={area(flowGreenHead)} fill="#05a82b" />
      <polygon points={area(flowRedTop)} fill="#f73a3c" />
      <polygon points={area(flowGreenTop)} fill="#05a82b" />
    </SubChart>
  );
}

function ChartTools() {
  return (
    <div className="ml-auto flex shrink-0 items-center gap-[11px] pr-[7px] text-[#666]">
      <FaCog size={16} />
      <FaQuestionCircle size={16} />
      <FaTimesCircle size={16} />
    </div>
  );
}

function ChartHead({ title, items, clip }: { title: string; items: [string, string, string, boolean][]; clip?: string }) {
  return (
    <div className="flex h-[25px] shrink-0 items-center pl-[11px] text-[15px] whitespace-nowrap">
      <span className="mr-[10px] shrink-0 text-[#666]">{title}</span>
      {items.map(([label, color, margin, up]) => (
        <span key={label} className={`flex shrink-0 items-center gap-[2px] ${color} ${margin}`}>
          {label}
          {up ? <FaArrowUp size={12} className="text-[#f00]" /> : <FaArrowDown size={12} className="text-[#05a32b]" />}
        </span>
      ))}
      {clip && <span className="ml-[14px] min-w-0 flex-1 overflow-hidden pr-[8px] text-[#f53c3c]">{clip}</span>}
      <ChartTools />
    </div>
  );
}

function RightPanel() {
  return (
    <div className="flex min-w-0 flex-1 flex-col overflow-hidden">
      <div className="flex h-[71px] shrink-0 flex-col px-[10px]">
        <div className="flex h-[39px] items-center pt-[4px]">
          <span className="text-[24px] font-bold whitespace-nowrap text-[#222]">880014 其他电子</span>
          <span className="ml-[5px] flex h-[19px] w-[14px] items-center justify-center border border-[#ddd] bg-[#eef1f6] text-[12px] font-bold text-[#666]">i</span>
          <div className="ml-auto flex items-center gap-[5px]">
            <div className="flex h-[24px] w-[25px] items-center justify-center border border-[#d8dbe8] text-[#555]">
              <FaBell size={16} />
            </div>
            <div className="flex h-[24px] items-center border border-[#d8dbe8]">
              <div className="flex w-[70px] items-center justify-center gap-[2px] text-[17px] text-[#222]">
                <Plus size={18} strokeWidth={2.5} className="text-[#3d7cff]" />
                自选
              </div>
              <div className="flex h-full w-[19px] items-center justify-center border-l border-[#d8dbe8]">
                <div className="h-0 w-0 border-x-[5px] border-t-[6px] border-x-transparent border-t-[#333]" />
              </div>
            </div>
          </div>
        </div>
        <div className="flex items-baseline font-bold text-[#f00]">
          <span className="text-[25px] leading-[28px]">1652.88</span>
          <span className="ml-[7px] text-[18px]">+1.58%</span>
          <span className="ml-[8px] text-[18px]">+25.69</span>
        </div>
      </div>
      <div className="flex h-[30px] shrink-0 items-center justify-between border-t border-[#d8dbe8] bg-[#e9edf5] pr-[8px] pl-[10px] text-[16px] text-[#333]">
        行情数据
        <div className="flex items-center gap-[15px] text-[#666]">
          <ChevronsUp size={18} />
          <LayoutGrid size={16} strokeWidth={1.6} />
        </div>
      </div>
      <div className="grid h-[166px] shrink-0 grid-cols-[173px_174px_174px] gap-x-[19px] overflow-hidden pl-[6px]">
        {marketStats.map((row) =>
          [0, 3, 6].map((i) => (
            <div key={row[i]} className="flex h-[28px] items-center justify-between">
              <span className="text-[18px] text-[#666]">{row[i]}</span>
              <span className={`text-[19px] ${row[i + 2]}`}>{row[i + 1]}</span>
            </div>
          )),
        )}
      </div>
      <div className="flex h-[30px] shrink-0 gap-[1px] border-y border-[#e2e4ee] pt-[3px] pl-[4px]">
        <div className="flex h-[24px] w-[75px] items-center justify-center bg-[#cfdcf5] text-[16px] text-[#4a8cf7]">分时图</div>
        <div className="flex h-[24px] w-[75px] items-center justify-center bg-[#e9edf5] text-[16px] text-[#333]">K线图</div>
      </div>
      <div className="relative flex h-[33px] shrink-0 items-center pb-[4px] pl-[8px] text-[15px] whitespace-nowrap text-[#333]">
        <span>880014其他电子</span>
        <span className="ml-[21px] text-[#f53c3c]">成交价 1652.88涨幅 1.58%</span>
        <span className="ml-[22px]">成交量 5.76万</span>
        <span className="ml-[19px]">成交额 9199.8万</span>
        <div className="absolute top-[6px] right-[7px] flex items-center gap-[11px] text-[#666]/80">
          <FaCog size={16} />
          <FaTimesCircle size={16} />
        </div>
      </div>
      <TimeChart />
      <div className="border-t border-[#e2e4ee]">
        <ChartHead
          title="资金博弈"
          items={[
            ["超大单净买:-", "text-[#f0f]", "mr-[13px]", false],
            ["大单净买:-", "text-[#f53c3c]", "mr-[13px]", false],
            ["中单净买:-", "text-[#e08a1e]", "mr-[13px]", true],
            ["小单净买:-", "text-[#05a32b]", "", true],
          ]}
        />
      </div>
      <LineChart />
      <div className="border-t border-[#e2e4ee]">
        <ChartHead
          title="主力博弈"
          items={[
            ["大额净买占比:-", "text-[#e08a1e]", "mr-[12px]", false],
            ["大额净买:-", "text-[#e08a1e]", "mr-[12px]", false],
            ["大额主动净买占比:-", "text-[#f53c3c]", "", false],
          ]}
          clip="大额主动"
        />
      </div>
      <MainBarChart />
      <div className="border-t border-[#e2e4ee]">
        <ChartHead
          title="资金动向"
          items={[
            ["资金主买:-", "text-[#f53c3c]", "mr-[13px]", false],
            ["资金主卖:-", "text-[#05a32b]", "mr-[13px]", false],
            ["资金主动净买:-", "text-[#f0f]", "mr-[13px]", false],
            ["主买比:-", "text-[#05a32b]", "", false],
          ]}
        />
      </div>
      <FlowChart />
      <div className="ml-[6px] grid h-[25px] w-[560px] shrink-0 grid-cols-5 items-center border-t border-[#e2e4ee] text-center text-[14px] whitespace-nowrap text-[#333]">
        <span>04/25 9:30</span>
        <span>10:30</span>
        <span>13:00</span>
        <span>14:00</span>
        <span>15:00</span>
      </div>
    </div>
  );
}

function TopBar() {
  return (
    <div className="flex h-[38px] shrink-0 items-center bg-[#363d5b]">
      <svg width="26" height="30" viewBox="0 0 26 30" className="ml-[7px] shrink-0">
        <rect width="26" height="30" rx="3" fill="#d7191c" />
        <path d="M6 6H21L14 15H20L9 27 12 17H7L12 10H5Z" fill="#ffdf80" />
      </svg>
      <span className="ml-[5px] text-[20px] font-bold whitespace-nowrap text-[#ffe79a]">经传多赢</span>
      <span className="ml-[3px] text-[15px] whitespace-nowrap text-[#ffe79a]">智尊版</span>
      <span className="ml-[6px] flex h-[21px] w-[33px] items-center justify-center border border-[#ffe79a] text-[15px] text-[#ffe79a]">演示</span>
      <div className="mr-[18px] ml-[6px] h-[18px] w-px bg-[#6a7190]" />
      {topMenu.map(([label, width, yellow, dot]) => (
        <div key={label} className="relative flex shrink-0 items-center text-[18px]" style={{ width }}>
          <span className={yellow ? "text-[#ffe79a]" : "text-white"}>{label}</span>
          {dot && <div className="absolute -top-[1px] left-[36px] h-[7px] w-[7px] rounded-full bg-[#f00]" />}
        </div>
      ))}
      <div className="ml-auto flex items-center pr-[8px] text-[#d5d8e2]">
        {["宝箱", "学习", "社群", "圈子"].map((t, i) => (
          <div key={t} className="relative mr-[9px] flex h-[25px] w-[53px] items-center justify-center border border-[#ffe79a] text-[18px] text-[#ffe79a]">
            {t}
            {i > 1 && <div className="absolute -top-[4px] -right-[3px] h-[9px] w-[9px] rounded-full bg-[#f00]" />}
          </div>
        ))}
        <FaUser size={21} className="ml-[7px]" />
        <FaCog size={21} className="ml-[17px]" />
        <svg width="24" height="22" viewBox="0 0 24 22" className="ml-[15px]" fill="none" stroke="#d5d8e2" strokeWidth="2">
          <rect x="1" y="1" width="22" height="20" />
          <rect x="1" y="1" width="22" height="4" fill="#d5d8e2" />
        </svg>
        <div className="ml-[12px] h-[22px] w-px bg-[#6a7190]" />
        <ChevronDown size={22} className="ml-[15px]" />
        <Minus size={20} className="ml-[17px]" />
        <Copy size={18} className="ml-[20px] -scale-x-100" />
        <X size={22} className="ml-[18px]" />
      </div>
    </div>
  );
}

function NavBar() {
  return (
    <div className="flex h-[32px] shrink-0 items-center border-t border-[#454d70] bg-[#323957] text-[15px] text-[#c7cad6]">
      <div className="flex h-full w-[99.5px] shrink-0 items-center justify-center gap-[2px] border-r border-[#454d70]">
        <FaHome size={14} />
        首页
      </div>
      {navTabs.map((t) => (
        <div key={t} className="flex h-full w-[100.4px] shrink-0 items-center justify-center gap-[3px] border-r border-[#454d70] whitespace-nowrap">
          {t === "我的持仓" && <span className="flex h-[17px] w-[17px] items-center justify-center rounded-full bg-[#c7cad6] text-[11px] font-bold text-[#323957]">¥</span>}
          {t}
        </div>
      ))}
      <div className="flex h-full w-[100px] shrink-0 items-center justify-end gap-[2px] bg-[#414e7e] pr-[5px] text-white">
        智能盯盘
        <X size={14} />
      </div>
      <div className="flex flex-1 items-center justify-between pr-[8px] pl-[5px]">
        <span className="text-[15px] font-bold tracking-[-1px]">•••</span>
        <span className="flex h-[18px] w-[18px] items-center justify-center rounded-full bg-[#666] text-[12px] font-bold text-[#323957]">!</span>
        <Minus size={17} strokeWidth={3} />
        <span className="text-[15px]">100%</span>
        <Plus size={18} strokeWidth={2.5} />
        <FaStar size={16} />
        <FaPen size={14} />
        <svg width="16" height="16" viewBox="0 0 16 16" fill="#c7cad6">
          <rect x="0" y="0" width="4" height="16" />
          <rect x="6" y="0" width="10" height="6" />
          <rect x="6" y="8" width="10" height="8" />
        </svg>
      </div>
    </div>
  );
}

function SubBar() {
  return (
    <div className="flex h-[31px] shrink-0 items-end border-y border-[#d8dbe8] bg-[#e9edf5] pl-[8px] text-[18px]">
      <div className="flex h-[30px] items-center text-[#333]">智能盯盘</div>
      <div className="ml-[8px] flex h-[30px] w-[88px] items-center justify-center bg-[#4080f5] text-white">板块筛选</div>
      <div className="ml-auto flex h-[30px] items-center pr-[14px]">
        <span className="text-[#333]">数据时间:</span>
        <span className="ml-[15px] w-[100px] overflow-hidden text-[20px] tracking-[0.3px] whitespace-nowrap text-[#333]">2025-04-25</span>
        <span className="ml-[10px] text-[#3d7cff]">教学</span>
        <svg width="15" height="20" viewBox="0 0 15 20" className="ml-[4px]">
          <rect width="15" height="20" rx="1" fill="#5b9bf5" />
          <path d="M3 4H12M3 8H9" stroke="#fff" strokeWidth="1.4" />
          <path d="M3.5 12 6.5 15.5 11.5 9.5" stroke="#fff" strokeWidth="1.8" fill="none" />
        </svg>
      </div>
    </div>
  );
}

function NewsBar() {
  return (
    <div className="flex h-[30px] shrink-0 items-center border-y-2 border-[#d8dbe8] pr-[15px] pl-[14px] text-[16px] whitespace-nowrap text-[#222]">
      <div className="flex w-[238px] shrink-0 justify-end overflow-hidden">
        <span>全国规模以上工业企业利润增长0.8%</span>
      </div>
      <span className="ml-[40px] shrink-0">09:21 财联社4月27日电，中国央行今日开展900亿元7天逆回购操作，投标量900亿元，中标量900亿元，操作利率为1.50%，与此前持平。</span>
      <span className="ml-[36px] shrink-0">09:19 消息称TikTok将进军日本在线购物市场</span>
      <span className="ml-[43px] shrink-0 text-[#ff8c00]">证券投资顾问业务风险提示</span>
      <span className="ml-[42px] shrink-0">09:19 中国贸促会将于4月28日上午10:00-11:00召开4月例行新闻发布会</span>
      <div className="ml-[40px] min-w-0 flex-1 overflow-hidden">09:18 伊朗未公布</div>
    </div>
  );
}

function QuoteBar() {
  return (
    <div className="relative grid h-[32px] shrink-0 grid-cols-[471px_471px_469px_470px_1fr] items-center border-b border-[#d8dbe8] bg-[#fffef4] text-[17px] font-semibold whitespace-nowrap">
      {quoteData.map((q, i) => (
        <div key={q[0]} className={`flex h-[24px] items-center ${q[5]} ${i < 4 ? "border-r border-[#d8dbe8]" : ""}`}>
          <span className="font-normal text-[#ff8c00]">{q[0]}</span>
          <span className={`ml-[4px] ${signColor(q[2])}`}>{q[1]}</span>
          <span className={`ml-[11px] ${signColor(q[2])}`}>{q[2]}</span>
          <span className={`ml-[11px] ${signColor(q[2])}`}>{q[3]}</span>
          <span className="ml-[12px] text-[#ff8c00]">{q[4]}</span>
        </div>
      ))}
      <div className="absolute top-[-6px] right-0 flex h-[38px] w-[250px] items-center text-[#0e7ae6]">
        <div className="flex h-[36px] w-[36px] -rotate-12 items-center justify-center rounded-[5px] bg-[#f4511e] text-[28px] font-bold text-white">S</div>
        <span className="ml-[9px] text-[18px] font-bold">中</span>
        <span className="ml-[14px] text-[16px] font-bold">°,</span>
        <FaMicrophone size={18} className="ml-[26px]" />
        <Keyboard size={20} className="ml-[12px]" />
        <FaTshirt size={19} className="ml-[11px]" />
        <div className="ml-[12px] grid h-[16px] w-[16px] grid-cols-2 gap-[2px]">
          <div className="rounded-[2px] bg-[#0e7ae6]" />
          <div className="rounded-[2px] bg-[#0e7ae6]" />
          <div className="rounded-[2px] bg-[#0e7ae6]" />
          <div className="rounded-[2px] bg-[#0e7ae6]" />
        </div>
        <svg width="26" height="26" viewBox="0 0 26 26" className="ml-[9px]">
          <circle cx="13" cy="13" r="12" fill="#f4f4f4" />
          <ellipse cx="12" cy="14" rx="8" ry="5" fill="#e8622c" />
          <circle cx="9" cy="13" r="1.5" fill="#333" />
          <circle cx="15" cy="13" r="1.5" fill="#333" />
        </svg>
      </div>
    </div>
  );
}

export default function App() {
  return (
    <div className="flex h-[1390px] w-[2560px] flex-col overflow-hidden bg-white font-['Noto_Sans','Noto_Sans_CJK_SC',sans-serif]">
      <TopBar />
      <NavBar />
      <SubBar />
      <div className="flex h-[1227px] shrink-0 overflow-hidden">
        <LeftPanel />
        <CenterPanel />
        <RightPanel />
      </div>
      <NewsBar />
      <QuoteBar />
    </div>
  );
}
